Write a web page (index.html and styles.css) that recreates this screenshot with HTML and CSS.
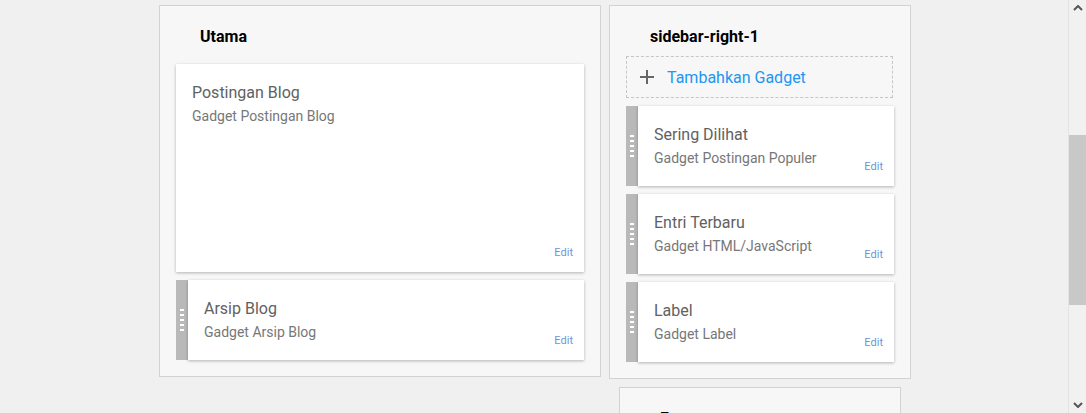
FILE: index.html
```html
<!DOCTYPE html>
<html lang="id">
<head>
  <meta charset="UTF-8" />
  <meta name="viewport" content="width=device-width, initial-scale=1" />
  <title>Tata Letak</title>
  <link rel="stylesheet" href="styles.css">
</head>
<body>
  <div class="page">
    <div class="layout">
      <div class="column column-main">
        <section class="section">
          <h2 class="section-title">Utama</h2>
          <div class="widgets widgets-locked">
            <div class="widget">
              <div class="widget-body widget-tall">
                <div class="widget-info">
                  <div class="widget-title">Postingan Blog</div>
                  <div class="widget-type">Gadget Postingan Blog</div>
                </div>
                <a class="widget-edit" href="#">Edit</a>
              </div>
            </div>
            <div class="widget">
              <div class="handle"><span></span><span></span><span></span><span></span><span></span></div>
              <div class="widget-body">
                <div class="widget-info">
                  <div class="widget-title">Arsip Blog</div>
                  <div class="widget-type">Gadget Arsip Blog</div>
                </div>
                <a class="widget-edit" href="#">Edit</a>
              </div>
            </div>
          </div>
        </section>
      </div>

      <div class="column column-side">
        <section class="section">
          <h2 class="section-title">sidebar-right-1</h2>
          <div class="widgets">
            <a class="add-gadget" href="#">
              <svg class="add-icon" width="14" height="14" viewBox="0 0 14 14">
                <path d="M7 0v14M0 7h14" stroke="#666" stroke-width="2" fill="none"/>
              </svg>
              <span>Tambahkan Gadget</span>
            </a>
            <div class="widget">
              <div class="handle"><span></span><span></span><span></span><span></span><span></span></div>
              <div class="widget-body">
                <div class="widget-info">
                  <div class="widget-title">Sering Dilihat</div>
                  <div class="widget-type">Gadget Postingan Populer</div>
                </div>
                <a class="widget-edit" href="#">Edit</a>
              </div>
            </div>
            <div class="widget">
              <div class="handle"><span></span><span></span><span></span><span></span><span></span></div>
              <div class="widget-body">
                <div class="widget-info">
                  <div class="widget-title">Entri Terbaru</div>
                  <div class="widget-type">Gadget HTML/JavaScript</div>
                </div>
                <a class="widget-edit" href="#">Edit</a>
              </div>
            </div>
            <div class="widget">
              <div class="handle"><span></span><span></span><span></span><span></span><span></span></div>
              <div class="widget-body">
                <div class="widget-info">
                  <div class="widget-title">Label</div>
                  <div class="widget-type">Gadget Label</div>
                </div>
                <a class="widget-edit" href="#">Edit</a>
              </div>
            </div>
          </div>
        </section>

        <section class="section section-nested">
          <h2 class="section-title">Footer</h2>
        </section>
      </div>
    </div>

    <div class="scrollbar">
      <svg class="scroll-arrow" width="10" height="6" viewBox="0 0 10 6">
        <path d="M1 5l4-4 4 4" stroke="#555" stroke-width="2" fill="none"/>
      </svg>
      <div class="scroll-track">
        <div class="scroll-thumb"></div>
      </div>
      <svg class="scroll-arrow" width="10" height="6" viewBox="0 0 10 6">
        <path d="M1 1l4 4 4-4" stroke="#555" stroke-width="2" fill="none"/>
      </svg>
    </div>
  </div>
</body>
</html>
```

FILE: styles.css
```css
html, body {
  margin: 0;
  height: 100%;
  overflow: hidden;
}
body {
  font-family: Roboto, "Noto Sans", Arial, sans-serif;
  background: #f0f0f0;
  color: #000;
}
.page {
  display: flex;
  height: 413px;
}
.layout {
  flex: 1;
  display: flex;
  justify-content: center;
  align-items: flex-start;
  gap: 8px;
  padding: 5px 0 0 2px;
}
.column-main {
  width: 442px;
}
.column-side {
  width: 302px;
}
.section {
  background: #f7f7f7;
  border: 1px solid #d2d2d2;
  padding: 0 16px 16px;
}
.section-nested {
  margin: 8px 10px 0;
  height: 60px;
}
.section-title {
  margin: 0 0 9px;
  padding: 21px 24px 0;
  font-size: 16px;
  line-height: 20px;
  font-weight: bold;
}
.widgets {
  display: flex;
  flex-direction: column;
  gap: 8px;
}
.widgets-locked {
  padding-top: 8px;
}
.add-gadget {
  display: flex;
  align-items: center;
  height: 40px;
  padding-left: 13px;
  border: 1px dashed #c6c6c6;
  margin-right: 1px;
  text-decoration: none;
  color: #2196f3;
  font-size: 16px;
}
.add-icon {
  margin-right: 13px;
}
.widget {
  display: flex;
}
.handle {
  width: 12px;
  flex: none;
  background: #b9b9b9;
  display: flex;
  flex-direction: column;
  justify-content: center;
  align-items: center;
  gap: 3px;
}
.handle span {
  display: block;
  width: 4px;
  height: 2px;
  background: #fff;
}
.widget-body {
  flex: 1;
  display: flex;
  height: 80px;
  box-sizing: border-box;
  padding: 18px 11px 13px 16px;
  background: #fff;
  box-shadow: 0 1px 3px rgba(0,0,0,0.28);
}
.widget-tall {
  height: 208px;
}
.widget-info {
  flex: 1;
}
.widget-title {
  font-size: 16px;
  line-height: 22px;
  color: #616161;
}
.widget-type {
  margin-top: 2px;
  font-size: 14px;
  line-height: 20px;
  color: #777;
}
.widget-edit {
  align-self: flex-end;
  font-size: 11px;
  line-height: 12px;
  color: #7094d8;
  text-decoration: none;
}
.scrollbar {
  width: 17px;
  border-left: 1px solid #e4e4e4;
  background: #f1f1f1;
  display: flex;
  flex-direction: column;
  align-items: center;
}
.scroll-arrow {
  flex: none;
  margin: 5px 0;
}
.scroll-track {
  flex: 1;
  align-self: stretch;
  padding-top: 119px;
}
.scroll-thumb {
  height: 170px;
  background: #c8c8c8;
}
```
